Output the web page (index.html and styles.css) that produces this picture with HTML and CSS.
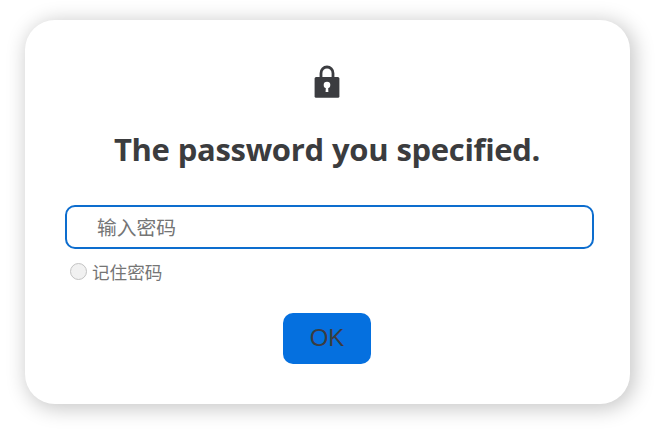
FILE: index.html
```html
<!DOCTYPE html>
<html lang="zh-CN">
<head>
<meta charset="utf-8">
<title>Password</title>
<link rel="stylesheet" href="styles.css">
</head>
<body>
<form class="dialog">
  <svg class="lock" viewBox="0 0 26 34" aria-hidden="true">
    <path d="M7 14V8.2a6 6.2 0 0 1 12 0V14" fill="none" stroke="#3b3c40" stroke-width="2.8"/>
    <rect x=".6" y="12" width="24.8" height="20.8" rx="1.5" fill="#3b3c40"/>
    <circle cx="13" cy="20" r="3.3" fill="#fff"/>
    <path d="M12 20h2l.4 7h-2.8z" fill="#fff"/>
  </svg>
  <h1 class="title">The password you specified.</h1>
  <input class="field" type="text" placeholder="输入密码" aria-label="输入密码">
  <label class="remember"><input class="radio" type="radio"><span class="caption">记住密码</span></label>
  <button class="ok" type="button">OK</button>
</form>
</body>
</html>
```
FILE: styles.css
```css
* { box-sizing: border-box; }
body {
  margin: 0;
  height: 429px;
  overflow: hidden;
  background: #fff;
  font-family: "Liberation Sans", "Noto Sans CJK SC", sans-serif;
}
.dialog {
  display: flex;
  flex-direction: column;
  align-items: center;
  width: 605px;
  height: 384px;
  margin: 20px 0 0 25px;
  padding: 45px 41px 0 40px;
  border-radius: 30px;
  background: #fff;
  box-shadow: 3px 3px 20px 2px rgba(0, 0, 0, .22);
}
.lock {
  width: 26px;
  height: 34px;
}
.title {
  margin: 28px 0 0;
  height: 44px;
  line-height: 44px;
  font-family: "Open Sans", "Noto Sans", sans-serif;
  font-size: 31px;
  font-weight: 700;
  letter-spacing: -.34px;
  word-spacing: .6px;
  white-space: nowrap;
  color: #3b3c3e;
}
.field {
  align-self: flex-start;
  width: 529px;
  height: 44px;
  margin-top: 34px;
  padding: 0 30px 2px;
  border: 2px solid #0d6dce;
  border-radius: 10px;
  outline: 0;
  background: #fff;
  font-family: "Noto Sans CJK SC", sans-serif;
  font-size: 19.8px;
}
.field::placeholder {
  color: #757575;
  opacity: 1;
}
.remember {
  display: flex;
  align-items: center;
  align-self: flex-start;
  gap: 5px;
  height: 26px;
  margin: 10px 0 0 5px;
  font-family: "Noto Sans CJK SC", sans-serif;
  font-size: 17.6px;
  color: #757575;
}
.caption {
  padding-bottom: 2px;
}
.radio {
  appearance: none;
  width: 17px;
  height: 17px;
  margin: 0 0 1px;
  border: 1px solid #c3c3c3;
  border-radius: 50%;
  background: #f1f1f1;
}
.ok {
  width: 88px;
  height: 51px;
  margin-top: 28px;
  padding: 0 0 1px;
  border: 0;
  border-radius: 10px;
  background: #0570df;
  font-family: "Liberation Sans", sans-serif;
  font-size: 24px;
  color: #3b3c40;
}
```
